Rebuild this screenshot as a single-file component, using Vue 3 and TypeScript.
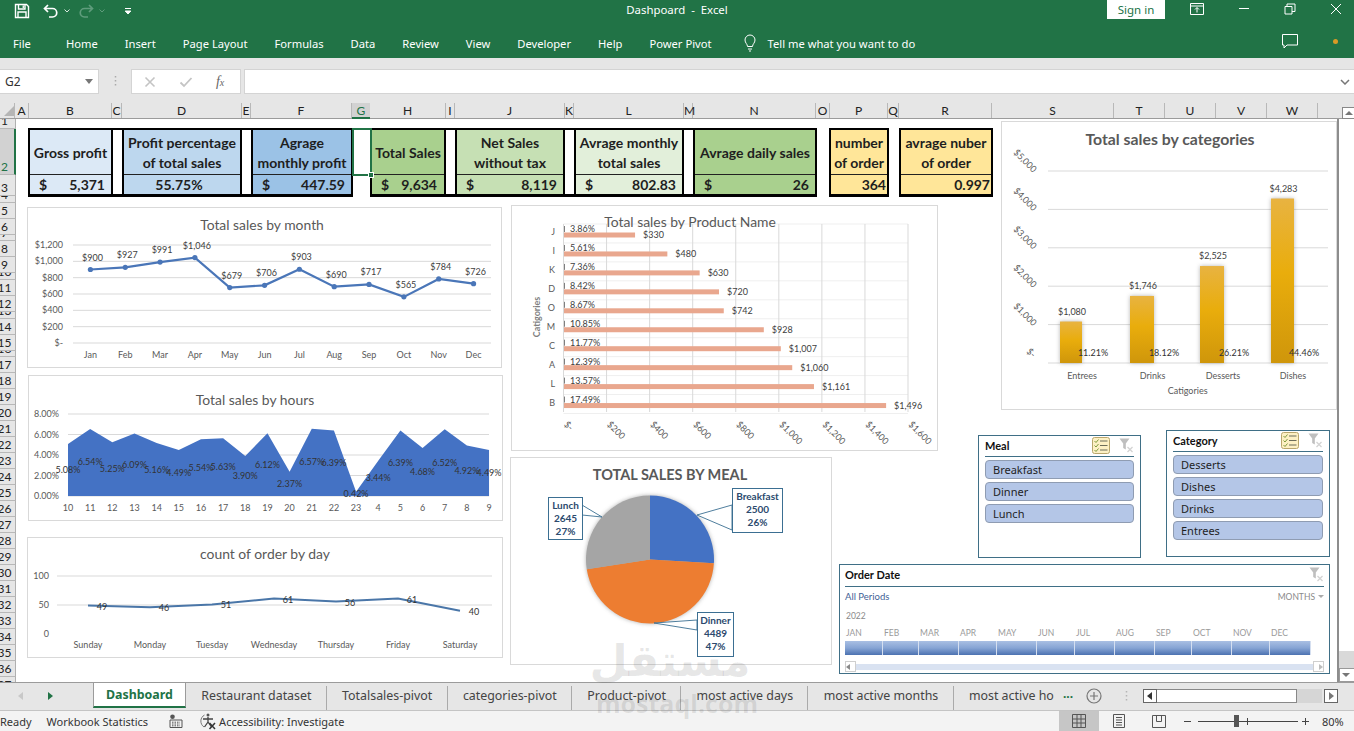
<script setup lang="ts">
const ribbonTabs = ['Home', 'Insert', 'Page Layout', 'Formulas', 'Data', 'Review', 'View', 'Developer', 'Help', 'Power Pivot']

const columns = [
  ['A', 14], ['B', 83], ['C', 10], ['D', 120], ['E', 9], ['F', 101], ['G', 18], ['H', 76], ['I', 9], ['J', 110], ['K', 9],
  ['L', 110], ['M', 9], ['N', 123], ['O', 14], ['P', 58], ['Q', 11], ['R', 93], ['S', 122], ['T', 51], ['U', 51], ['V', 51], ['W', 51], ['', 20],
] as [string, number][]

const rowHeights: Record<number, number> = { 1: 10, 2: 46, 3: 21, 4: 7, 7: 6, 10: 7, 13: 7, 16: 6 }
const rows = Array.from({ length: 37 }, (_, i) => ({ n: i + 1, h: rowHeights[i + 1] ?? 16 }))

interface Kpi { title: string[]; cur?: boolean; value: string; bg: string; w: number; center?: boolean; pad: number; gapAfter: 'frame' | 'sel' | 'free' | 'none'; gap: number }
const kpis: Kpi[] = [
  { title: ['Gross profit'], cur: true, value: '5,371', bg: '#dce9f6', w: 85, pad: 6, gapAfter: 'frame', gap: 9 },
  { title: ['Profit percentage', 'of total sales'], value: '55.75%', bg: '#bdd7ee', w: 120, center: true, pad: 6, gapAfter: 'frame', gap: 9 },
  { title: ['Agrage', 'monthly profit'], cur: true, value: '447.59', bg: '#9bc2e6', w: 102, pad: 6, gapAfter: 'sel', gap: 17 },
  { title: ['Total Sales'], cur: true, value: '9,634', bg: '#a9d08e', w: 76, pad: 7, gapAfter: 'frame', gap: 9 },
  { title: ['Net Sales', 'without tax'], cur: true, value: '8,119', bg: '#c6e0b4', w: 110, pad: 6, gapAfter: 'frame', gap: 9 },
  { title: ['Avrage monthly', 'total sales'], cur: true, value: '802.83', bg: '#e2efda', w: 110, pad: 6, gapAfter: 'frame', gap: 9 },
  { title: ['Avrage daily sales'], cur: true, value: '26', bg: '#a9d08e', w: 124, pad: 6, gapAfter: 'free', gap: 12 },
  { title: ['number', 'of order'], value: '364', bg: '#ffe699', w: 60, pad: 1, gapAfter: 'free', gap: 10 },
  { title: ['avrage nuber', 'of order'], value: '0.997', bg: '#ffe699', w: 94, pad: 1, gapAfter: 'none', gap: 0 },
]

// Total sales by month
const months = ['Jan', 'Feb', 'Mar', 'Apr', 'May', 'Jun', 'Jul', 'Aug', 'Sep', 'Oct', 'Nov', 'Dec']
const monthVals = [900, 927, 991, 1046, 679, 706, 903, 690, 717, 565, 784, 726]
const mX = (i: number) => 73 + (i + 0.5) * 34.83
const mY = (v: number) => 343 - (v / 1200) * 98
const monthPts = monthVals.map((v, i) => ({ x: mX(i), y: mY(v), v, label: '$' + v.toLocaleString('en-US'), m: months[i] }))
const monthLine = monthPts.map((p) => `${p.x},${p.y}`).join(' ')
const monthTicks = [0, 200, 400, 600, 800, 1000, 1200].map((v) => ({ y: mY(v), label: v === 0 ? '$-' : '$' + v.toLocaleString('en-US') }))

// Total sales by hours
const hourCats = [10, 11, 12, 13, 14, 15, 16, 17, 18, 19, 20, 21, 22, 23, 4, 5, 6, 7, 8, 9]
const hourVals = [5.08, 6.54, 5.25, 6.09, 5.16, 4.49, 5.54, 5.63, 3.9, 6.12, 2.37, 6.57, 6.39, 0.42, 3.44, 6.39, 4.68, 6.52, 4.92, 4.49]
const hX = (i: number) => 68 + i * 22.16
const hY = (v: number) => 496 - (v / 8) * 82
const hourPts = hourVals.map((v, i) => ({ x: hX(i), y: hY(v), midY: 496 - (v / 16) * 82, label: v.toFixed(2) + '%', c: hourCats[i] }))
const hourArea = `68,496 ${hourPts.map((p) => `${p.x},${p.y}`).join(' ')} ${hX(19)},496`
const hourTicks = [0, 2, 4, 6, 8].map((v) => ({ y: hY(v), label: v.toFixed(2) + '%', v }))

// count of order by day
const days = ['Sunday', 'Monday', 'Tuesday', 'Wednesday', 'Thursday', 'Friday', 'Saturday']
const dayVals = [49, 46, 51, 61, 56, 61, 40]
const dayPts = dayVals.map((v, i) => ({ x: 88 + i * 62, y: 634 - (v / 100) * 58, v, d: days[i] }))
const dayLine = dayPts.map((p) => `${p.x},${p.y}`).join(' ')

// Total sales by product
const products = [
  ['J', 330, '3.86%'], ['I', 480, '5.61%'], ['K', 630, '7.36%'], ['D', 720, '8.42%'], ['O', 742, '8.67%'],
  ['M', 928, '10.85%'], ['C', 1007, '11.77%'], ['A', 1060, '12.39%'], ['L', 1161, '13.57%'], ['B', 1496, '17.49%'],
].map(([n, v, p], i) => {
  const w = ((v as number) / 1600) * 344.5
  return { n, w, label: '$' + (v as number).toLocaleString('en-US'), p, y: 235 + i * 18.95 }
})
const prodTicks = [0, 200, 400, 600, 800, 1000, 1200, 1400, 1600].map((v) => ({ x: 563.5 + (v / 1600) * 344.5, label: v === 0 ? '$-' : '$' + v.toLocaleString('en-US') }))
const prodRows = Array.from({ length: 11 }, (_, i) => 224 + i * 18.95)

// Total sales by meal
const pieCx = 650
const pieCy = 559.5
const pieR = 64
const slice = (from: number, to: number) => {
  const pt = (f: number) => {
    const a = f * 2 * Math.PI
    return `${pieCx + pieR * Math.sin(a)},${pieCy - pieR * Math.cos(a)}`
  }
  return `M${pieCx},${pieCy} L${pt(from)} A${pieR},${pieR} 0 ${to - from > 0.5 ? 1 : 0} 1 ${pt(to)} Z`
}
const pieSlices = [
  { d: slice(0, 0.2595), c: '#4472c4' },
  { d: slice(0.2595, 0.7255), c: '#ed7d31' },
  { d: slice(0.7255, 1), c: '#a5a5a5' },
]
const callouts = [
  { x: 732, y: 488, w: 50, h: 44, lines: ['Breakfast', '2500', '26%'], wedge: '697,515 732,505 732,530' },
  { x: 548, y: 497, w: 34, h: 42, lines: ['Lunch', '2645', '27%'], wedge: '602,517 582,505 582,515' },
  { x: 697, y: 612, w: 36, h: 44, lines: ['Dinner', '4489', '47%'], wedge: '654,623 697,620 697,630' },
]

// Total sales by categories
const catY = (v: number) => 363 - (v / 5000) * 192
const cats = [
  { n: 'Entrees', v: 1080, p: '11.21%', lx: 1082, px: 1093, bx: 1060, bw: 22 },
  { n: 'Drinks', v: 1746, p: '18.12%', lx: 1152.7, px: 1164, bx: 1130, bw: 24 },
  { n: 'Desserts', v: 2525, p: '26.21%', lx: 1223, px: 1234, bx: 1200, bw: 24 },
  { n: 'Dishes', v: 4283, p: '44.46%', lx: 1293, px: 1304, bx: 1271, bw: 23 },
].map((c) => ({ ...c, top: catY(c.v), label: '$' + c.v.toLocaleString('en-US') }))
const catTicks = [0, 1000, 2000, 3000, 4000, 5000].map((v) => ({ y: catY(v), label: v === 0 ? '$-' : '$' + v.toLocaleString('en-US'), v }))

const slicers = [
  { name: 'Meal', cls: 'slicer-meal', items: ['Breakfast', 'Dinner', 'Lunch'] },
  { name: 'Category', cls: 'slicer-category', items: ['Desserts', 'Dishes', 'Drinks', 'Entrees'] },
]

const tlMonths = [['JAN', 38], ['FEB', 36], ['MAR', 40], ['APR', 38], ['MAY', 40], ['JUN', 38], ['JUL', 40], ['AUG', 40], ['SEP', 37], ['OCT', 40], ['NOV', 38], ['DEC', 41]] as [string, number][]
const tlGrid = tlMonths.map((m) => m[1] + 'px').join(' ')

const sheetTabs = ['Restaurant dataset', 'Totalsales-pivot', 'categories-pivot', 'Product-pivot', 'most active days', 'most active months']
</script>

<template>
  <div class="excel">
    <header class="titlebar">
      <div class="qat">
        <svg class="qi" viewBox="0 0 16 16" width="16" height="16"><path d="M1.500 1.500h11l2 2v11h-13z M4.500 1.500v4.500h6.500v-4.500 M4 14.500v-5.500h8v5.500" fill="none" stroke="#fff" stroke-width="1.400" /><rect x="8.600" y="2.400" width="1.300" height="2.600" fill="#fff" /></svg>
        <svg class="qi undo" viewBox="0 0 16 16" width="16" height="16"><path d="M5 2 L1.500 5.500 L5 9 M2 5.500 H9.500 a4 4 0 0 1 0 8.500 H6" fill="none" stroke="#fff" stroke-width="1.700" /></svg>
        <svg class="qd" viewBox="0 0 6 4" width="6" height="4"><path d="M0.500 0.500 L3 3 L5.500 0.500" fill="none" stroke="#d7e6dd" /></svg>
        <svg class="qi redo" viewBox="0 0 16 16" width="16" height="16"><path d="M11 2 L14.500 5.500 L11 9 M14 5.500 H6.500 a4 4 0 0 0 0 8.500 H10" fill="none" stroke="#5f9c7c" stroke-width="1.700" /></svg>
        <svg class="qd" viewBox="0 0 6 4" width="6" height="4"><path d="M0.500 0.500 L3 3 L5.500 0.500" fill="none" stroke="#5f9c7c" /></svg>
        <svg class="qc" viewBox="0 0 8 8" width="8" height="8"><path d="M1 1.500h6M1.200 4h5.600L4 7z" stroke="#fff" fill="#fff" stroke-width="1" /></svg>
      </div>
      <div class="doc-title">Dashpoard&nbsp; -&nbsp; Excel</div>
      <div class="sign-in">Sign in</div>
      <svg class="win w1" viewBox="0 0 14 12" width="14" height="12"><path d="M0.500 0.500h13v11h-13z M0.500 3h13 M7 9.500V4.800 M5 6.500 L7 4.500 L9 6.500" fill="none" stroke="#fff" /></svg>
      <svg class="win w2" viewBox="0 0 12 12" width="12" height="12"><path d="M1 6.500h10" stroke="#fff" /></svg>
      <svg class="win w3" viewBox="0 0 12 12" width="12" height="12"><path d="M1 3.500h7v7.500h-7z M3 3.500V1h8v7.500H8" fill="none" stroke="#fff" /></svg>
      <svg class="win w4" viewBox="0 0 12 12" width="12" height="12"><path d="M1 1L11 11M11 1L1 11" stroke="#fff" /></svg>
    </header>

    <nav class="ribbon">
      <span class="rtab file">File</span>
      <span v-for="t in ribbonTabs" :key="t" class="rtab">{{ t }}</span>
      <svg class="bulb" viewBox="0 0 14 18" width="14" height="18"><path d="M4.500 12.500 C4.500 10 2 9 2 6 a5 5 0 0 1 10 0 C12 9 9.500 10 9.500 12.500z M5 15h4 M6 17h2" fill="none" stroke="#fff" /></svg>
      <span class="tell">Tell me what you want to do</span>
      <svg class="comment" viewBox="0 0 16 15" width="16" height="15"><path d="M0.500 0.500h15v10.500h-10.500l-3 3v-3h-1.500z" fill="none" stroke="#fff" /></svg>
      <span class="dot"></span>
    </nav>

    <section class="formula-bar">
      <div class="name-box"><span>G2</span><i class="caret"></i></div>
      <svg class="dots" viewBox="0 0 3 12" width="3" height="12"><path d="M1.500 1v1.500M1.500 5v1.500M1.500 9v1.500" stroke="#aaa" stroke-width="1.500" /></svg>
      <div class="fx-box">
        <svg viewBox="0 0 12 12" width="12" height="12"><path d="M1.500 1.500L10.500 10.500M10.500 1.500L1.500 10.500" stroke="#c4c4c4" stroke-width="1.600" /></svg>
        <svg viewBox="0 0 14 12" width="14" height="12"><path d="M1.500 6.500L5 10L12.500 2" fill="none" stroke="#c4c4c4" stroke-width="1.800" /></svg>
        <span class="fx">f<small>x</small></span>
      </div>
      <div class="input-box">
        <svg viewBox="0 0 10 6" width="10" height="6"><path d="M1 1L5 5L9 1" fill="none" stroke="#777" stroke-width="1.500" /></svg>
      </div>
    </section>

    <section class="col-headers">
      <div class="corner"><i></i></div>
      <div v-for="c in columns" :key="c[0] || 'end'" class="col" :class="{ sel: c[0] === 'G', last: !c[0] }" :style="{ width: c[1] + 'px' }">{{ c[0] }}</div>
      <div class="up-arrow"><i></i></div>
    </section>

    <section class="sheet-area">
      <div class="row-headers">
        <div v-for="r in rows" :key="r.n" class="row" :class="{ sel: r.n === 2 }" :style="{ height: r.h + 'px' }"><span>{{ r.n }}</span></div>
      </div>

      <div class="canvas">
        <div class="kpi-strip">
          <template v-for="k in kpis" :key="k.title[0]">
            <div class="kpi" :style="{ width: k.w + 'px', background: k.bg }">
              <div class="kpi-head"><span v-for="l in k.title" :key="l">{{ l }}</span></div>
              <div class="kpi-val" :class="{ center: k.center }" :style="{ paddingRight: k.pad + 'px' }">
                <span v-if="k.cur">$</span><span>{{ k.value }}</span>
              </div>
            </div>
            <div v-if="k.gapAfter !== 'none'" class="kpi-gap" :class="k.gapAfter" :style="{ width: k.gap + 'px' }">
              <div v-if="k.gapAfter === 'sel'" class="selection"><i></i></div>
            </div>
          </template>
        </div>

        <figure class="chart c-month">
          <svg viewBox="27 207 475 161" width="475" height="161">
            <text class="t-title" x="262" y="230">Total sales by month</text>
            <g v-for="t in monthTicks" :key="t.y">
              <line class="grid" x1="73" x2="491" :y1="t.y" :y2="t.y" />
              <text class="t-axis" x="63" :y="t.y + 3" text-anchor="end">{{ t.label }}</text>
            </g>
            <polyline :points="monthLine" fill="none" stroke="#4a76b8" stroke-width="2.200" />
            <g v-for="p in monthPts" :key="p.m">
              <circle :cx="p.x" :cy="p.y" r="2.600" fill="#4a76b8" />
              <text class="t-data mid" :x="p.x + 2" :y="p.y - 9">{{ p.label }}</text>
              <text class="t-axis mid" :x="p.x" y="358">{{ p.m }}</text>
            </g>
          </svg>
        </figure>

        <figure class="chart c-hours">
          <svg viewBox="28 375 475 146" width="475" height="146">
            <text class="t-title" x="255" y="405">Total sales by hours</text>
            <g v-for="t in hourTicks" :key="t.v">
              <line class="grid" x1="68" x2="489" :y1="t.y" :y2="t.y" />
              <text class="t-axis" x="59" :y="t.y + 3" text-anchor="end">{{ t.label }}</text>
            </g>
            <polygon :points="hourArea" fill="#4472c4" />
            <g v-for="p in hourPts" :key="p.c">
              <text class="t-over mid" :x="p.x" :y="p.midY + 3">{{ p.label }}</text>
              <text class="t-axis mid" :x="p.x" y="511">{{ p.c }}</text>
            </g>
          </svg>
        </figure>

        <figure class="chart c-day">
          <svg viewBox="27 537 476 121" width="476" height="121">
            <text class="t-title" x="265" y="559">count of order by day</text>
            <line class="grid" x1="57" x2="492" y1="576" y2="576" />
            <line class="grid" x1="57" x2="492" y1="605" y2="605" />
            <text class="t-axis" x="49" y="579" text-anchor="end">100</text>
            <text class="t-axis" x="49" y="608" text-anchor="end">50</text>
            <text class="t-axis" x="49" y="637" text-anchor="end">0</text>
            <polyline :points="dayLine" fill="none" stroke="#4a76a8" stroke-width="2" />
            <g v-for="p in dayPts" :key="p.d">
              <text class="t-over mid" :x="p.x + 14" :y="p.y + 4">{{ p.v }}</text>
              <text class="t-axis mid" :x="p.x" y="648">{{ p.d }}</text>
            </g>
          </svg>
        </figure>

        <figure class="chart c-product">
          <svg viewBox="511 205 427 246" width="427" height="246">
            <line v-for="(y, i) in prodRows" :key="i" class="grid faint" x1="563.500" x2="908" :y1="y" :y2="y" />
            <line v-for="t in prodTicks" :key="t.label" class="grid" :x1="t.x" :x2="t.x" y1="224" y2="412" />
            <text class="t-title" x="690" y="227">Total sales by Product Name</text>
            <g v-for="p in products" :key="(p.n as string)">
              <line x1="564.500" x2="564.500" :y1="p.y - 9" :y2="p.y - 3" stroke="#7f7f7f" />
              <rect x="564" :y="p.y - 2.500" :width="p.w" height="5" fill="#e9a78e" />
              <text class="t-data" x="570" :y="p.y - 3">{{ p.p }}</text>
              <text class="t-data" :x="564 + p.w + 8" :y="p.y + 3">{{ p.label }}</text>
              <text class="t-axis" x="555" :y="p.y" text-anchor="end">{{ p.n }}</text>
            </g>
            <text class="t-axis-b mid" transform="translate(540 317) rotate(-90)">Catigories</text>
            <text v-for="t in prodTicks" :key="t.label + 't'" class="t-axis" :transform="`translate(${t.x} 425) rotate(45)`">{{ t.label }}</text>
          </svg>
        </figure>

        <figure class="chart c-pie">
          <svg viewBox="510 457 322 208" width="322" height="208">
            <text class="t-head" x="670" y="480">TOTAL SALES BY MEAL</text>
            <g class="pie-shadow">
              <path v-for="s in pieSlices" :key="s.c" :d="s.d" :fill="s.c" />
            </g>
            <g v-for="c in callouts" :key="c.lines[0]">
              <polygon :points="c.wedge" fill="#fff" stroke="#3b6f92" stroke-width="0.900" />
              <rect :x="c.x + 0.500" :y="c.y + 0.500" :width="c.w" :height="c.h" fill="#fff" stroke="#3b6f92" />
              <text v-for="(l, i) in c.lines" :key="l" class="t-call mid" :x="c.x + c.w / 2 + 0.500" :y="c.y + 12 + i * 13">{{ l }}</text>
            </g>
          </svg>
        </figure>

        <figure class="chart c-cats">
          <svg viewBox="1001 121 336 289" width="336" height="289">
            <defs>
              <linearGradient id="goldBar" x1="0" x2="0" y1="0" y2="1">
                <stop offset="0" stop-color="#e8b341" />
                <stop offset="0.450" stop-color="#e9ad0c" />
                <stop offset="1" stop-color="#cf960b" />
              </linearGradient>
            </defs>
            <text class="t-head wide" x="1170" y="145">Total sales by categories</text>
            <g v-for="t in catTicks" :key="t.v">
              <line class="grid" x1="1048" x2="1328" :y1="t.y" :y2="t.y" />
              <text class="t-axis mid" :transform="`translate(${t.v === 0 ? 1029 : 1023} ${t.y - 8}) rotate(45)`">{{ t.label }}</text>
            </g>
            <g v-for="c in cats" :key="c.n">
              <rect class="bar-shadow" :x="c.bx" :y="c.top" :width="c.bw" :height="363 - c.top" fill="url(#goldBar)" />
              <text class="t-data mid" :x="c.bx + c.bw / 2 + 1" :y="c.top - 7">{{ c.label }}</text>
              <text class="t-over mid" :x="c.px" y="356">{{ c.p }}</text>
              <text class="t-axis mid" :x="c.lx" y="379">{{ c.n }}</text>
            </g>
            <text class="t-axis mid" x="1187.700" y="394">Catigories</text>
          </svg>
        </figure>

        <aside v-for="s in slicers" :key="s.name" class="slicer" :class="s.cls">
          <div class="slicer-head">
            <span class="slicer-name">{{ s.name }}</span>
            <svg class="multi" viewBox="0 0 18 17" width="18" height="17">
              <rect x="0.500" y="0.500" width="17" height="16" rx="2" fill="#fdf0c4" stroke="#b9a66c" />
              <path d="M2.500 4L4 5.500L6.500 2.500M2.500 8.500L4 10L6.500 7M2.500 13L4 14.500L6.500 11.500" fill="none" stroke="#7d9a3c" />
              <path d="M8 4h7.500M8 8.500h7.500M8 13h7.500" stroke="#6d6d5a" stroke-width="1.200" />
            </svg>
            <svg class="funnel" viewBox="0 0 15 15" width="15" height="15">
              <path d="M0.500 0.500h10L6.800 5.500v6L4.200 10V5.500z" fill="#bfbfbf" />
              <path d="M8.500 9L13.500 14M13.500 9L8.500 14" stroke="#d3d3d3" stroke-width="1.300" />
            </svg>
          </div>
          <ul class="slicer-items">
            <li v-for="i in s.items" :key="i">{{ i }}</li>
          </ul>
        </aside>

        <aside class="timeline">
          <div class="tl-head">
            <span>Order Date</span>
            <svg class="funnel" viewBox="0 0 15 15" width="15" height="15">
              <path d="M0.500 0.500h10L6.800 5.500v6L4.200 10V5.500z" fill="#bfbfbf" />
              <path d="M8.500 9L13.500 14M13.500 9L8.500 14" stroke="#d3d3d3" stroke-width="1.300" />
            </svg>
          </div>
          <div class="tl-meta"><span class="tl-all">All Periods</span><span class="tl-level">MONTHS <i></i></span></div>
          <div class="tl-year">2022</div>
          <div class="tl-months" :style="{ gridTemplateColumns: tlGrid }">
            <div v-for="m in tlMonths" :key="m[0]" class="tl-month">
              <span>{{ m[0] }}</span>
              <i></i>
            </div>
          </div>
          <div class="tl-scroll">
            <span class="tl-arrow left"><i></i></span>
            <span class="tl-track"></span>
            <span class="tl-arrow right"><i></i></span>
          </div>
        </aside>
      </div>

      <div class="vscroll">
        <div class="v-thumb"></div>
        <div class="v-track"></div>
        <div class="v-down"><i></i></div>
      </div>
    </section>

    <section class="tabbar">
      <div class="tab-nav">
        <i class="nav-left"></i>
        <i class="nav-right"></i>
      </div>
      <div class="tab active">Dashboard</div>
      <div v-for="t in sheetTabs" :key="t" class="tab">{{ t }}</div>
      <div class="tab last">most active ho</div>
      <span class="more">...</span>
      <svg class="add" viewBox="0 0 16 16" width="16" height="16"><circle cx="8" cy="8" r="7" fill="none" stroke="#777" stroke-width="1.200" /><path d="M8 4v8M4 8h8" stroke="#777" stroke-width="1.200" /></svg>
      <svg class="tab-dots" viewBox="0 0 3 12" width="3" height="12"><path d="M1.500 1v1.500M1.500 5v1.500M1.500 9v1.500" stroke="#b5b5b5" stroke-width="1.500" /></svg>
      <div class="hscroll">
        <span class="h-btn"><i class="nav-left dark"></i></span>
        <span class="h-thumb"></span>
        <span class="h-track"></span>
        <span class="h-btn end"><i class="nav-right grey"></i></span>
      </div>
    </section>

    <footer class="statusbar">
      <span class="st-ready">Ready</span>
      <span class="st-stats">Workbook Statistics</span>
      <svg class="st-icon" viewBox="0 0 14 14" width="14" height="14"><circle cx="3.500" cy="2.800" r="2.300" fill="#555" /><path d="M1 6h12v7.500H1z" fill="none" stroke="#555" /><path d="M3 8.200h8M3 10h8M3 11.800h8" stroke="#555" stroke-dasharray="1.500 1" /></svg>
      <svg class="st-acc" viewBox="0 0 18 18" width="18" height="18"><path d="M5.500 3A7 7 0 0 0 5 15" fill="none" stroke="#777" /><circle cx="9" cy="3" r="1.500" fill="#555" /><path d="M4 7h10M9 5v5M9 10L5.500 15M9 10L12.500 15" stroke="#444" stroke-width="1.300" fill="none" /><path d="M10.500 11L16 17M16 11L10.500 17" stroke="#333" stroke-width="1.500" /></svg>
      <span class="st-text">Accessibility: Investigate</span>
      <div class="st-right">
        <span class="view-btn on"><svg viewBox="0 0 14 14" width="14" height="14"><path d="M0.500 0.500h13v13h-13z M5 0.500v13 M9 0.500v13 M0.500 5h13 M0.500 9h13" fill="none" stroke="#555" /></svg></span>
        <span class="view-btn"><svg viewBox="0 0 12 14" width="12" height="14"><path d="M0.500 0.500h11v13h-11z M3 3.500h6M3 6h6M3 8.500h6M3 11h6" fill="none" stroke="#555" /></svg></span>
        <span class="view-btn"><svg viewBox="0 0 14 13" width="14" height="13"><path d="M0.500 0.500h13v12h-13z M4.500 0.500v6h5v-6" fill="none" stroke="#555" /></svg></span>
        <span class="zoom-sign minus"></span>
        <div class="zoom-slider"><i class="z-mid"></i><i class="z-thumb"></i></div>
        <span class="zoom-sign plus"></span>
        <span class="zoom-val">80%</span>
      </div>
    </footer>

    <div class="watermark" aria-hidden="true">
      <span class="wm-ar">مستقل</span>
      <span class="wm-en">mostaql.com</span>
    </div>
  </div>
</template>

<style scoped>
.excel {
  position: relative;
  width: 1354px;
  height: 731px;
  overflow: hidden;
  display: flex;
  flex-direction: column;
  background: #e6e6e6;
  font-family: "Noto Sans", "Open Sans", sans-serif;
  color: #333;
}

/* title bar */
.titlebar {
  position: relative;
  display: flex;
  align-items: flex-start;
  flex: none;
  height: 28px;
  background: #217346;
  color: #fff;
}
.qat { position: absolute; left: 14px; top: 3px; display: flex; align-items: center; }
.qi.undo { margin-left: 13px; }
.qd { margin-left: 5px; }
.qi.redo { margin-left: 8px; }
.qc { margin-left: 19px; }
.doc-title { position: absolute; left: 0; right: 0; top: 2px; text-align: center; font-size: 11.400px; line-height: 16px; }
.sign-in { position: absolute; left: 1107px; top: 0; width: 58px; height: 19px; background: #fff; color: #217346; font-size: 11.500px; line-height: 20px; text-align: center; }
.win { position: absolute; top: 3px; }
.w1 { left: 1190px; }
.w2 { left: 1238px; top: 2px; }
.w3 { left: 1284px; }
.w4 { left: 1330px; }

/* ribbon */
.ribbon {
  position: relative;
  display: flex;
  align-items: center;
  flex: none;
  height: 30px;
  padding-left: 13px;
  gap: 27px;
  background: #217346;
  color: #fff;
  font-size: 11.200px;
  white-space: nowrap;
}
.rtab.file { margin-right: 8px; }
.bulb { margin-left: 4px; margin-right: -16px; }
.comment { position: absolute; left: 1282px; top: 6px; }
.dot { position: absolute; left: 1333px; top: 11px; width: 5px; height: 5px; border-radius: 50%; background: #d99a26; }

/* formula bar */
.formula-bar {
  position: relative;
  display: flex;
  align-items: flex-start;
  flex: none;
  height: 45px;
  padding-top: 11px;
  box-sizing: border-box;
}
.name-box {
  position: relative;
  box-sizing: border-box;
  width: 99px;
  height: 25px;
  padding-left: 5px;
  background: #fff;
  border: 1px solid #d4d4d4;
  border-left: 0;
  font-size: 12px;
  line-height: 23px;
}
.caret { position: absolute; left: 85px; top: 9px; border: 4px solid transparent; border-top: 5px solid #777; border-bottom: 0; }
.dots { margin: 6px 14px 0 15px; }
.fx-box {
  display: flex;
  align-items: center;
  box-sizing: border-box;
  width: 110px;
  height: 25px;
  padding-left: 12px;
  gap: 23px;
  background: #fff;
  border: 1px solid #d4d4d4;
}
.fx { font-family: "Liberation Serif", serif; font-style: italic; font-size: 14px; color: #666; }
.fx small { font-size: 10px; }
.input-box {
  position: relative;
  box-sizing: border-box;
  width: 1111px;
  height: 25px;
  margin-left: 3px;
  background: #fff;
  border: 1px solid #d4d4d4;
  border-right: 0;
}
.input-box svg { position: absolute; right: 4px; top: 9px; }

/* column headers */
.col-headers {
  position: relative;
  display: flex;
  flex: none;
  box-sizing: border-box;
  height: 16px;
  border-bottom: 1px solid #9b9b9b;
  font-family: "Lato", sans-serif;
  font-size: 12px;
  color: #222;
}
.corner { position: relative; width: 15px; border-right: 1px solid #b8b8b8; box-sizing: border-box; }
.corner i { position: absolute; left: 4px; top: 3px; border-style: solid; border-width: 0 0 10px 10px; border-color: transparent transparent #b5b5b5 transparent; }
.col {
  box-sizing: border-box;
  text-align: center;
  line-height: 15px;
  border-right: 1px solid #b8b8b8;
}
.col.sel { background: #d2d2d2; border-bottom: 2px solid #217346; color: #217346; border-right: 0; height: 16px; }
.col.last { border-right: 0; }
.up-arrow { position: absolute; left: 1342px; top: 4px; width: 12px; height: 12px; box-sizing: border-box; background: #fff; border: 1px solid #888; border-right: 0; }
.up-arrow i { position: absolute; left: 2px; top: 3px; border: 4px solid transparent; border-bottom: 4px solid #777; border-top: 0; }

/* sheet */
.sheet-area { display: flex; flex: none; height: 563px; overflow: hidden; }
.row-headers { width: 16px; flex: none; overflow: hidden; font-family: "Lato", sans-serif; font-size: 12px; color: #222; background: #e6e6e6; }
.row {
  box-sizing: border-box;
  display: flex;
  align-items: flex-end;
  justify-content: center;
  overflow: hidden;
  padding-right: 6px;
  border-bottom: 1px solid #b8b8b8;
  border-right: 1px solid #b0b0b0;
  line-height: 15px;
}
.row span { display: block; }
.row.sel { background: #d2d2d2; border-right: 2px solid #217346; color: #217346; padding-right: 5px; }
.canvas { position: relative; flex: 1; background: #fff; border-right: 2px solid #8d8d8d; }

/* KPI strip */
.kpi-strip {
  display: flex;
  height: 69px;
  margin: 9px 0 0 12px;
  font-family: "Lato", sans-serif;
  font-size: 14px;
  font-weight: 700;
  color: #1e1e1e;
}
.kpi { box-sizing: border-box; flex: none; display: flex; flex-direction: column; border: 2px solid #000; border-bottom-width: 3px; }
.kpi-head {
  box-sizing: border-box;
  flex: none;
  height: 45px;
  padding-top: 2px;
  display: flex;
  flex-direction: column;
  align-items: center;
  justify-content: center;
  white-space: nowrap;
  line-height: 20px;
  border-bottom: 1px solid #222;
}
.kpi-val { flex: 1; display: flex; justify-content: space-between; align-items: center; padding-left: 9px; }
.kpi-val.center { justify-content: center; padding: 0; }
.kpi-val span:only-child { margin-left: auto; }
.kpi-val.center span { margin: 0; }
.kpi-gap { flex: none; box-sizing: border-box; position: relative; }
.kpi-gap.frame { border-top: 2px solid #000; border-bottom: 3px solid #000; }
.selection { position: absolute; left: -1px; top: 0; width: 20px; height: 48px; box-sizing: border-box; border: 2px solid #217346; }
.selection i { position: absolute; right: -4px; bottom: -4px; width: 6px; height: 6px; background: #217346; border: 1px solid #fff; box-sizing: border-box; }

/* floating charts */
.chart { position: absolute; margin: 0; background: #fff; outline: 1px solid #d9d9d9; outline-offset: -1px; }
.chart svg { display: block; font-family: "Lato", sans-serif; }
.c-month { left: 11px; top: 88px; width: 475px; height: 161px; }
.c-hours { left: 12px; top: 256px; width: 475px; height: 146px; }
.c-day { left: 11px; top: 418px; width: 476px; height: 121px; }
.c-product { left: 495px; top: 86px; width: 427px; height: 246px; }
.c-pie { left: 494px; top: 338px; width: 322px; height: 208px; }
.c-cats { left: 985px; top: 2px; width: 336px; height: 289px; }

.t-title { font-size: 13.900px; fill: #595959; text-anchor: middle; }
.t-head { font-size: 14.500px; font-weight: 700; fill: #595959; text-anchor: middle; }
.t-head.wide { font-size: 15.800px; }
.t-axis { font-size: 9px; fill: #595959; }
.t-axis-b { font-size: 9px; font-weight: 700; fill: #7f7f7f; }
.t-data { font-size: 9px; fill: #404040; }
.t-over { font-size: 9px; fill: #333; }
.t-call { font-size: 10px; font-weight: 700; fill: #2c4a6e; }
.mid { text-anchor: middle; }
.grid { stroke: #d9d9d9; stroke-width: 1; }
.grid.faint { stroke: #efefef; }
.pie-shadow { filter: drop-shadow(0 0 2px rgba(60, 60, 60, 0.4)); }
.bar-shadow { filter: drop-shadow(0 0 2px rgba(90, 90, 90, 0.45)); }

/* slicers */
.slicer {
  position: absolute;
  box-sizing: border-box;
  width: 163px;
  padding: 0 6px;
  background: #fff;
  border: 1px solid #3f6f86;
  font-family: "Lato", sans-serif;
}
.slicer-meal { left: 962px; top: 316px; height: 123px; }
.slicer-category { left: 1150px; top: 311px; width: 164px; height: 127px; }
.slicer-head {
  display: flex;
  align-items: center;
  box-sizing: border-box;
  height: 21px;
  padding-bottom: 2px;
  border-bottom: 1px solid #3f6f86;
  font-size: 11px;
  font-weight: 700;
  color: #111;
}
.slicer-name { flex: 1; }
.multi { margin-right: 9px; }
.funnel { flex: none; }
.slicer-items { list-style: none; margin: 3px 0 0; padding: 0; display: flex; flex-direction: column; gap: 3px; }
.slicer-items li {
  box-sizing: border-box;
  height: 19px;
  padding-left: 7px;
  background: #b4c6e7;
  border: 1px solid #8f9cb2;
  border-radius: 4px;
  font-family: "Noto Sans", sans-serif;
  font-size: 11px;
  line-height: 17px;
  color: #1f1f1f;
}

/* timeline */
.timeline {
  position: absolute;
  left: 823px;
  top: 445px;
  box-sizing: border-box;
  width: 491px;
  height: 110px;
  padding: 0 5px;
  background: #fff;
  border: 1px solid #3f6f86;
  font-family: "Lato", sans-serif;
}
.tl-head {
  display: flex;
  justify-content: space-between;
  align-items: center;
  box-sizing: border-box;
  height: 22px;
  padding-bottom: 2px;
  border-bottom: 1px solid #3f6f86;
  font-size: 11px;
  font-weight: 700;
  color: #111;
}
.tl-meta { display: flex; justify-content: space-between; align-items: center; height: 19px; font-size: 9.500px; }
.tl-all { color: #3f5f96; }
.tl-level { color: #8a8a8a; font-size: 8.500px; display: flex; align-items: center; gap: 3px; }
.tl-level i { border: 3px solid transparent; border-top: 3px solid #aaa; border-bottom: 0; }
.tl-year { height: 18px; padding-left: 1px; font-size: 8.500px; line-height: 20px; color: #8a8a8a; }
.tl-months { display: grid; margin-top: 2px; }
.tl-month { display: flex; flex-direction: column; font-size: 8.500px; color: #9a9a9a; }
.tl-month span { height: 15px; padding-left: 1px; line-height: 14px; }
.tl-month i { display: block; height: 14px; background: linear-gradient(#a9bfe3, #86a4d4 50%, #4c72b1); border-right: 1px solid #d5dff0; }
.tl-scroll { display: flex; align-items: center; height: 11px; margin-top: 6px; }
.tl-arrow { position: relative; flex: none; box-sizing: border-box; width: 11px; height: 11px; background: #fff; border: 1px solid #cfcfcf; }
.tl-arrow i { position: absolute; top: 2px; border: 3px solid transparent; }
.tl-arrow.left i { left: 0; border-right: 4px solid #8a8a8a; border-left: 0; }
.tl-arrow.right i { right: 0; border-left: 4px solid #bdbdbd; border-right: 0; }
.tl-track { flex: 1; height: 6px; background: #d9e2f1; }

/* vertical scrollbar */
.vscroll { flex: none; width: 15px; display: flex; flex-direction: column; background: #fff; }
.v-thumb { flex: 1; background: #fff; }
.v-track { height: 17px; background: #d9d9d9; }
.v-down { position: relative; height: 14px; background: #fff; border: 1px solid #999; border-right: 0; box-sizing: border-box; }
.v-down i { position: absolute; left: 2px; top: 4px; border: 4px solid transparent; border-top: 4px solid #777; border-bottom: 0; }

/* sheet tabs */
.tabbar {
  position: relative;
  display: flex;
  align-items: flex-start;
  flex: none;
  height: 29px;
  box-sizing: border-box;
  background: #e6e6e6;
  border-top: 1px solid #9b9b9b;
  border-bottom: 1px solid #c4c4c4;
  font-size: 12.400px;
  color: #444;
}
.tab-nav { position: relative; width: 93px; flex: none; }
.nav-left, .nav-right { position: absolute; top: 9px; border: 4px solid transparent; }
.nav-left { left: 18px; border-right: 5px solid #c8c8c8; border-left: 0; }
.nav-right { left: 48px; border-left: 5px solid #217346; border-right: 0; }
.tab {
  position: relative;
  display: flex;
  align-items: center;
  height: 25px;
  padding: 0 15.300px;
  white-space: nowrap;
}
.tab:not(.active):not(.last)::after {
  content: "";
  position: absolute;
  right: 0;
  top: 3px;
  bottom: -2px;
  width: 1px;
  background: #aaa;
}
.tab.active {
  height: 26px;
  margin-top: -1px;
  box-sizing: border-box;
  padding: 0 12px;
  background: #fff;
  border: 1px solid #9b9b9b;
  border-bottom: 2px solid #217346;
  color: #217346;
  font-weight: 700;
}
.more { position: absolute; left: 1063px; top: 2px; color: #217346; font-weight: 700; font-size: 12px; }
.add { position: absolute; left: 1086px; top: 5px; }
.tab-dots { position: absolute; left: 1125px; top: 7px; }
.hscroll { position: absolute; left: 1143px; top: 6px; display: flex; width: 195px; height: 14px; }
.h-btn { position: relative; flex: none; box-sizing: border-box; width: 14px; height: 14px; background: #fff; border: 1px solid #666; }
.h-btn .nav-left { left: 3px; top: 2px; border-right-color: #333; }
.h-btn .nav-right { left: 4px; top: 2px; border-left-color: #777; }
.h-thumb { flex: none; box-sizing: border-box; width: 140px; height: 14px; background: #fff; border: 1px solid #888; border-left: 0; }
.h-track { flex: 1; background: #d6d6d6; margin-right: 2px; }

/* status bar */
.statusbar {
  position: relative;
  display: flex;
  align-items: center;
  flex: none;
  height: 20px;
  background: #f3f3f3;
  font-size: 11px;
  color: #333;
}
.st-stats { margin-left: 15px; }
.st-icon { margin-left: 21px; }
.st-acc { margin-left: 16px; }
.st-text { margin-left: 2px; }
.st-right { position: absolute; left: 1059px; top: 0; height: 20px; right: 0; display: flex; align-items: center; }
.view-btn { display: flex; align-items: center; justify-content: center; width: 40px; height: 20px; }
.view-btn.on { background: #c6c6c6; }
.zoom-sign { position: relative; width: 7px; height: 7px; }
.zoom-sign::before { content: ""; position: absolute; left: 0; right: 0; top: 3px; height: 1px; background: #444; }
.zoom-sign.plus::after { content: ""; position: absolute; left: 3px; top: 0; bottom: 0; width: 1px; background: #444; }
.minus { margin-left: 5px; }
.zoom-slider { position: relative; width: 100px; height: 1px; margin: 0 4px 0 7px; background: #444; }
.z-mid { position: absolute; left: 49px; top: -3px; width: 1px; height: 7px; background: #444; }
.z-thumb { position: absolute; left: 36px; top: -6px; width: 5px; height: 12px; background: #555; }
.zoom-val { margin-left: 13px; }

/* watermark overlay */
.watermark {
  position: absolute;
  left: 585px;
  top: 632px;
  width: 170px;
  display: flex;
  flex-direction: column;
  align-items: center;
  pointer-events: none;
  color: rgba(70, 70, 70, 0.13);
  font-family: "DejaVu Sans", sans-serif;
  font-weight: 700;
}
.wm-ar { font-size: 44px; line-height: 58px; }
.wm-en { font-size: 25px; line-height: 26px; margin-left: 14px; font-family: "Open Sans", sans-serif; }
</style>

<style>
html, body { margin: 0; padding: 0; background: #fff; }
</style>
